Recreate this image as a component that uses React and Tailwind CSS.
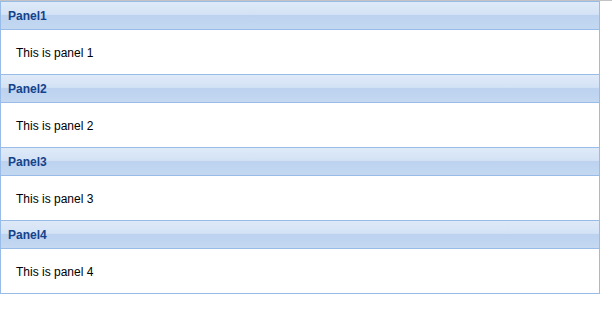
import React from 'react';

const panels = [
  { title: 'Panel1', body: 'This is panel 1' },
  { title: 'Panel2', body: 'This is panel 2' },
  { title: 'Panel3', body: 'This is panel 3' },
  { title: 'Panel4', body: 'This is panel 4' },
];

const App = () => {
  return (
    <div className="border-t border-[#c3c3c3] bg-white" style={{ fontFamily: '"Liberation Sans", Arial, sans-serif' }}>
      <div className="w-[600px] border-x border-b border-[#99bbe8]">
        {panels.map((p, i) => (
          <div key={i}>
            {/* header */}
            <div className="h-[29px] border-y border-[#99bbe8] bg-[linear-gradient(to_bottom,#dfeaf8_0%,#d3e2f5_46%,#bcd2ef_50%,#c4d8f1_100%)] flex items-center pl-[7px]">
              <span className="text-[12px] font-bold text-[#15428b] leading-none">{p.title}</span>
            </div>
            {/* body */}
            <div className="h-[44px] flex items-center pl-[15px] pt-[2px] text-[12px] text-black">
              {p.body}
            </div>
          </div>
        ))}
      </div>
    </div>
  );
};

export default App;
